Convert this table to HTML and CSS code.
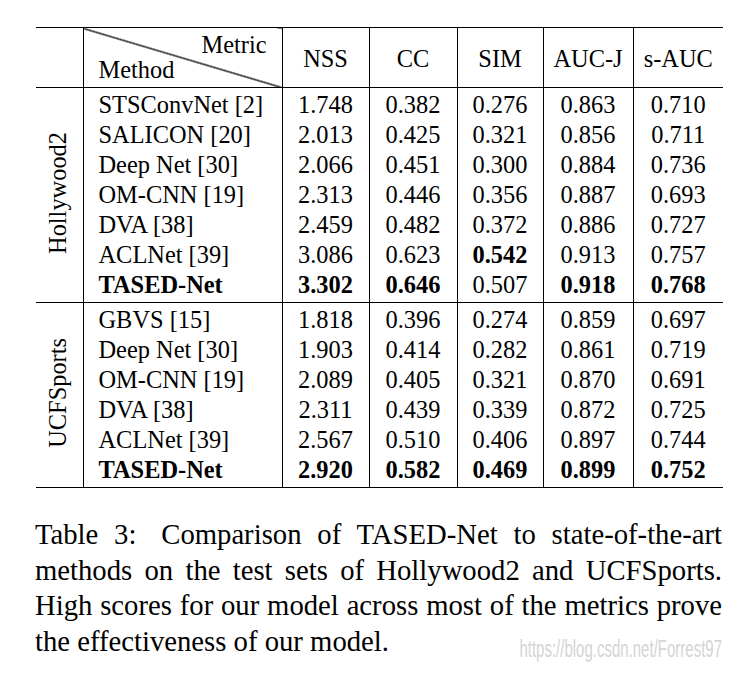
FILE: index.html
```html
<!DOCTYPE html>
<html>
<head>
<meta charset="utf-8">
<title>Table 3</title>
<link rel="stylesheet" href="styles.css">
</head>
<body>
<div class="page">
  <table class="results">
    <colgroup>
      <col class="c-group"><col class="c-method"><col class="c-nss"><col class="c-cc"><col class="c-sim"><col class="c-aucj"><col class="c-sauc">
    </colgroup>
    <thead>
      <tr class="head">
        <th class="corner"></th>
        <th class="diag"><div class="diag-inner"><span class="metric">Metric</span><span class="method">Method</span></div></th>
        <th>NSS</th><th>CC</th><th>SIM</th><th>AUC-J</th><th>s-AUC</th>
      </tr>
    </thead>
    <tbody class="group">
      <tr class="first"><td class="label" rowspan="7"><span class="vert">Hollywood2</span></td><td class="name">STSConvNet [2]</td><td>1.748</td><td>0.382</td><td>0.276</td><td>0.863</td><td>0.710</td></tr>
      <tr><td class="name">SALICON [20]</td><td>2.013</td><td>0.425</td><td>0.321</td><td>0.856</td><td>0.711</td></tr>
      <tr><td class="name">Deep Net [30]</td><td>2.066</td><td>0.451</td><td>0.300</td><td>0.884</td><td>0.736</td></tr>
      <tr><td class="name">OM-CNN [19]</td><td>2.313</td><td>0.446</td><td>0.356</td><td>0.887</td><td>0.693</td></tr>
      <tr><td class="name">DVA [38]</td><td>2.459</td><td>0.482</td><td>0.372</td><td>0.886</td><td>0.727</td></tr>
      <tr><td class="name">ACLNet [39]</td><td>3.086</td><td>0.623</td><td class="b">0.542</td><td>0.913</td><td>0.757</td></tr>
      <tr class="last"><td class="name b">TASED-Net</td><td class="b">3.302</td><td class="b">0.646</td><td>0.507</td><td class="b">0.918</td><td class="b">0.768</td></tr>
    </tbody>
    <tbody class="group">
      <tr class="first"><td class="label" rowspan="6"><span class="vert">UCFSports</span></td><td class="name">GBVS [15]</td><td>1.818</td><td>0.396</td><td>0.274</td><td>0.859</td><td>0.697</td></tr>
      <tr><td class="name">Deep Net [30]</td><td>1.903</td><td>0.414</td><td>0.282</td><td>0.861</td><td>0.719</td></tr>
      <tr><td class="name">OM-CNN [19]</td><td>2.089</td><td>0.405</td><td>0.321</td><td>0.870</td><td>0.691</td></tr>
      <tr><td class="name">DVA [38]</td><td>2.311</td><td>0.439</td><td>0.339</td><td>0.872</td><td>0.725</td></tr>
      <tr><td class="name">ACLNet [39]</td><td>2.567</td><td>0.510</td><td>0.406</td><td>0.897</td><td>0.744</td></tr>
      <tr class="last"><td class="name b">TASED-Net</td><td class="b">2.920</td><td class="b">0.582</td><td class="b">0.469</td><td class="b">0.899</td><td class="b">0.752</td></tr>
    </tbody>
  </table>
  <div class="caption">
    <div class="line">Table 3:<span class="gap"></span> Comparison of TASED-Net to state-of-the-art</div>
    <div class="line">methods on the test sets of Hollywood2 and UCFSports.</div>
    <div class="line">High scores for our model across most of the metrics prove</div>
    <div class="line last">the effectiveness of our model.</div>
  </div>
</div>
<div class="watermark">https://blog.csdn.net/Forrest97</div>
</body>
</html>
```

FILE: styles.css
```css
html, body {
  margin: 0;
  padding: 0;
  background: #fff;
}
body {
  width: 740px;
  height: 675px;
  overflow: hidden;
  position: relative;
  font-family: "Liberation Serif", "Times New Roman", serif;
  color: #000;
}
.page {
  padding: 27px 0 0 36px;
}
.results {
  border-collapse: collapse;
  table-layout: fixed;
  width: 687px;
  font-size: 24.4px;
}
.c-group { width: 47px; }
.c-method { width: 199px; }
.c-nss { width: 87px; }
.c-cc { width: 88px; }
.c-sim { width: 86px; }
.c-aucj { width: 90px; }
.c-sauc { width: 90px; }

.results th,
.results td {
  padding: 0;
  text-align: center;
  vertical-align: middle;
  font-weight: normal;
  border-left: 1px solid #000;
  white-space: nowrap;
}
.results .corner,
.results .label {
  border-left: none;
}
.head {
  border-top: 1px solid #000;
  border-bottom: 1px solid #000;
}
.head th {
  height: 57px;
  line-height: 30px;
  padding-top: 2px;
}
.group {
  border-bottom: 1px solid #000;
}
.results td {
  height: 30px;
  line-height: 30px;
}
.results tr.first td { padding-top: 2px; }
.results tr.last td { padding-bottom: 2px; }
.results td.label {
  padding: 5px 3px 0 0;
}
.results td.name {
  text-align: left;
  padding-left: 15px;
}
.results .b { font-weight: bold; }

.results th.diag {
  padding: 0;
  background: linear-gradient(to top right,
    rgba(0,0,0,0) calc(50% - 1px),
    #000 calc(50% - 0.3px),
    #000 calc(50% + 0.3px),
    rgba(0,0,0,0) calc(50% + 1px));
}
.diag-inner {
  display: flex;
  flex-direction: column;
  height: 59px;
  box-sizing: border-box;
  padding: 4px 15px 0 15px;
  line-height: 25px;
}
.metric { align-self: flex-end; }
.method { align-self: flex-start; }

.vert {
  display: inline-block;
  writing-mode: vertical-rl;
  transform: rotate(180deg);
  line-height: 1;
}

.caption {
  width: 687px;
  margin: 29px 0 0 -1px;
  font-size: 28.7px;
  line-height: 35.6px;
}
.caption .line {
  text-align: justify;
  text-align-last: justify;
}
.caption .line.last {
  text-align-last: left;
}
.gap {
  display: inline-block;
  width: 9px;
}

.watermark {
  position: absolute;
  right: 18px;
  top: 636px;
  font-family: "Liberation Sans", Arial, sans-serif;
  font-size: 15px;
  line-height: 15px;
  color: #d4d4d4;
  transform: scaleY(1.6);
  transform-origin: 100% 0;
}
```
